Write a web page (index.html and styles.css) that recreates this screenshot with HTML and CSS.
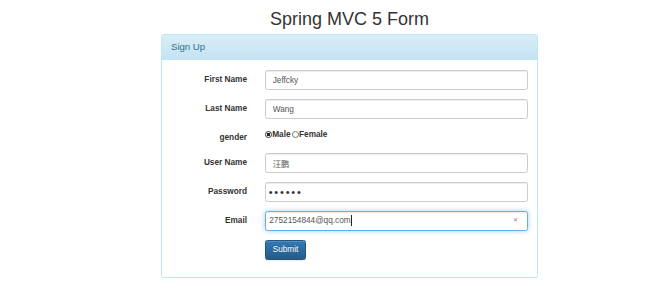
FILE: index.html
```html
<!DOCTYPE html>
<html lang="en">
<head>
  <meta charset="UTF-8">
  <meta name="viewport" content="width=device-width, initial-scale=1.0">
  <title>Spring MVC 5 Form</title>
  <link rel="stylesheet" href="styles.css">
</head>
<body>
  <div class="container">
    <h1 class="page-title">Spring MVC 5 Form</h1>

    <div class="panel">
      <div class="panel-heading">Sign Up</div>
      <form class="panel-body" action="#" method="post">
        <div class="form-row">
          <label class="control-label" for="firstName">First Name</label>
          <input class="form-control" type="text" id="firstName" value="Jeffcky">
        </div>
        <div class="form-row">
          <label class="control-label" for="lastName">Last Name</label>
          <input class="form-control" type="text" id="lastName" value="Wang">
        </div>
        <div class="form-row">
          <label class="control-label">gender</label>
          <div class="radios">
            <label class="radio-label"><input class="radio" type="radio" name="gender" value="male" checked>Male</label>
            <label class="radio-label"><input class="radio" type="radio" name="gender" value="female">Female</label>
          </div>
        </div>
        <div class="form-row">
          <label class="control-label" for="userName">User Name</label>
          <input class="form-control cjk" type="text" id="userName" value="汪鹏">
        </div>
        <div class="form-row">
          <label class="control-label" for="password">Password</label>
          <input class="form-control password" type="password" id="password" value="123456">
        </div>
        <div class="form-row">
          <label class="control-label">Email</label>
          <div class="form-control email focused">
            <span>2752154844@qq.com</span>
            <span class="caret"></span>
            <span class="clear">&#x2715;</span>
          </div>
        </div>
        <div class="form-row">
          <span></span>
          <div>
            <button class="btn-primary" type="submit">Submit</button>
          </div>
        </div>
      </form>
    </div>
  </div>
</body>
</html>
```

FILE: styles.css
```css
body {
  margin: 0;
  font-family: "Liberation Sans", Arial, sans-serif;
  font-size: 8.26px;
  line-height: 11.8px;
  color: #333;
  background-color: #fff;
}
.container {
  width: 377px;
  margin-left: 161px;
}
.page-title {
  margin: 9px 0 5px;
  font-size: 18px;
  line-height: 20px;
  font-weight: normal;
  text-align: center;
  color: #333;
}
.panel {
  border: 1px solid #bce8f1;
  border-radius: 2.4px;
  box-shadow: 0 1px 1px rgba(0,0,0,0.05);
}
.panel-heading {
  padding: 6px 9px;
  font-size: 9.6px;
  line-height: 12px;
  color: #31708f;
  background-image: linear-gradient(to bottom, #d9edf7 0%, #c4e3f3 100%);
  border-bottom: 1px solid #bce8f1;
  border-radius: 2px 2px 0 0;
}
.panel-body {
  margin: 0;
  padding: 10px 9px 8px;
}
.form-row {
  display: grid;
  grid-template-columns: 76px 1fr;
  column-gap: 17.7px;
  margin-bottom: 9px;
}
.control-label {
  padding-top: 4.1px;
  text-align: right;
  font-weight: bold;
}
.form-control {
  box-sizing: border-box;
  width: 100%;
  height: 20px;
  margin: 0;
  padding: 0 7px;
  font-family: "Liberation Sans", Arial, sans-serif;
  font-size: 8.26px;
  color: #555;
  background-color: #fff;
  border: 1px solid #ccc;
  border-radius: 2.4px;
  box-shadow: inset 0 1px 1px rgba(0,0,0,0.075);
  outline: none;
}
.cjk {
  font-family: "Liberation Sans", "Noto Sans CJK SC", sans-serif;
}
.password {
  padding-left: 3px;
  font-size: 11px;
  letter-spacing: 1.8px;
  color: #333;
}
.email {
  display: flex;
  align-items: center;
  padding: 0 9px 0 3.6px;
  color: #555;
}
.focused {
  border-color: #66afe9;
  box-shadow: inset 0 1px 1px rgba(0,0,0,0.075), 0 0 5px rgba(102,175,233,0.6);
}
.caret {
  width: 1px;
  height: 11px;
  margin-left: 0.5px;
  background-color: #222;
}
.clear {
  margin-left: auto;
  font-size: 6px;
  color: #888;
}
.radios {
  display: flex;
  align-items: center;
  height: 16px;
  align-self: start;
  margin-top: -1px;
}
.radio-label {
  display: inline-flex;
  align-items: center;
  font-weight: bold;
  margin-right: 1px;
}
.radio {
  appearance: none;
  box-sizing: border-box;
  width: 7px;
  height: 7px;
  margin: 0 0.5px 0 0;
  border: 1px solid #777;
  border-radius: 50%;
  background-color: #fff;
}
.radio:checked {
  border-color: #333;
  background-image: radial-gradient(circle, #222 0, #222 1.6px, #fff 2px);
}
.btn-primary {
  height: 20px;
  padding: 0 7px;
  font-family: "Liberation Sans", Arial, sans-serif;
  font-size: 8.26px;
  color: #fff;
  text-shadow: 0 -1px 0 rgba(0,0,0,0.2);
  background-image: linear-gradient(to bottom, #337ab7 0%, #265a88 100%);
  border: 1px solid #245580;
  border-radius: 2.4px;
  box-shadow: inset 0 1px 0 rgba(255,255,255,0.15), 0 1px 1px rgba(0,0,0,0.075);
  cursor: pointer;
}
```
